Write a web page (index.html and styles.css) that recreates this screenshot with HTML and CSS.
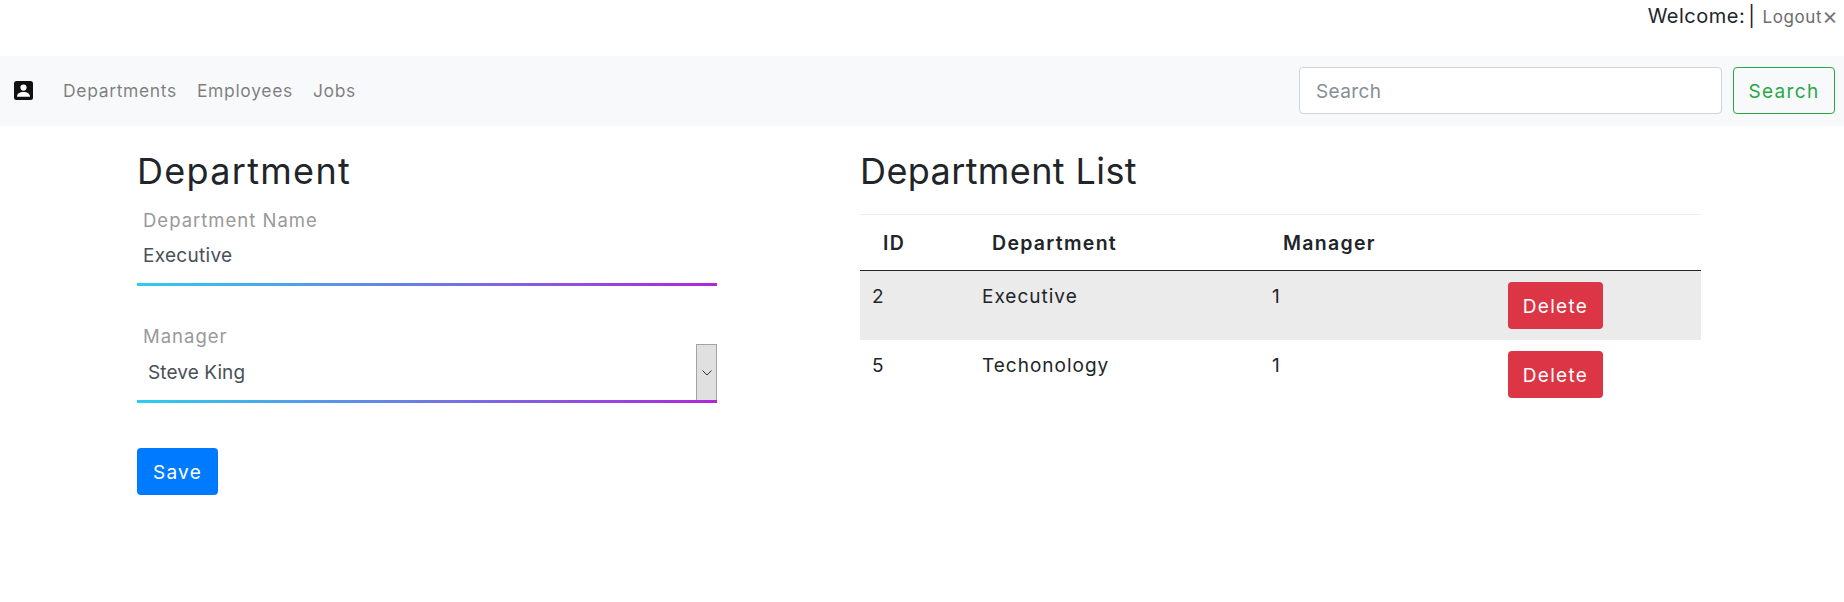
FILE: index.html
```html
<!DOCTYPE html>
<html lang="en">
<head>
  <meta charset="UTF-8">
  <title>Departments</title>
  <link rel="stylesheet" href="styles.css">
</head>
<body>
  <div class="topbar">
    <span class="welcome">Welcome: |</span>
    <a class="logout" href="#">Logout</a>
    <span class="close">×</span>
  </div>

  <nav class="navbar">
    <a class="brand" href="#">
      <svg width="19" height="19" viewBox="0 0 19 19">
        <rect width="19" height="19" rx="2.5" fill="#111"/>
        <circle cx="9.5" cy="6.6" r="3.1" fill="#fff"/>
        <path d="M3 15.8c0-3.4 2.6-4.9 6.500-4.900s6.500 1.500 6.500 4.900z" fill="#fff"/>
      </svg>
    </a>
    <ul class="nav-links">
      <li><a href="#">Departments</a></li>
      <li><a href="#">Employees</a></li>
      <li><a href="#">Jobs</a></li>
    </ul>
    <form class="search">
      <input type="text" placeholder="Search">
      <button type="button" class="btn btn-search">Search</button>
    </form>
  </nav>

  <main class="content">
    <section>
      <h2 class="title-form">Department</h2>
      <form>
        <div class="field">
          <label>Department Name</label>
          <input type="text" value="Executive">
        </div>
        <div class="field field-select">
          <label>Manager</label>
          <div class="select-row">
            <select>
              <option>Steve King</option>
            </select>
            <span class="select-arrow">
              <svg width="10" height="6" viewBox="0 0 10 6"><path d="M.5.5 5 5 9.500.5" fill="none" stroke="#333"/></svg>
            </span>
          </div>
        </div>
        <button type="button" class="btn btn-save">Save</button>
      </form>
    </section>

    <section>
      <h2>Department List</h2>
      <table class="list">
        <thead>
          <tr><th class="col-id">ID</th><th class="col-name">Department</th><th class="col-mgr">Manager</th><th class="col-action"></th></tr>
        </thead>
        <tbody>
          <tr class="odd"><td>2</td><td>Executive</td><td>1</td><td><button type="button" class="btn btn-delete">Delete</button></td></tr>
          <tr><td>5</td><td>Techonology</td><td>1</td><td><button type="button" class="btn btn-delete">Delete</button></td></tr>
        </tbody>
      </table>
    </section>
  </main>
</body>
</html>
```

FILE: styles.css
```css
* { box-sizing: border-box; }
body { margin: 0; font-family: Inter, "Open Sans", sans-serif; font-size: 16px; color: #212529; background: #fff; }
a { text-decoration: none; }

.topbar { height: 56px; display: flex; justify-content: flex-end; align-items: flex-start; padding: 4px 6px 0 0; line-height: 24px; }
.welcome { font-size: 20px; letter-spacing: .5px; word-spacing: -3px; margin-right: 7px; }
.logout { font-size: 17px; letter-spacing: .6px; color: #6c6c6c; margin-top: 1px; }
.close { font-size: 24px; color: #777; }

.navbar { height: 70px; background: #f8f9fa; display: flex; align-items: center; padding: 0 9px 0 14px; }
.brand { display: flex; margin-right: 30px; margin-bottom: 2px; }
.nav-links { display: flex; gap: 20px; list-style: none; margin: 0 0 2px; padding: 0; }
.nav-links a { font-size: 17.5px; letter-spacing: .65px; color: rgba(0,0,0,.5); }
.search { margin: 0 0 2px auto; display: flex; gap: 11px; }
.search input { width: 423px; height: 47px; border: 1px solid #ced4da; border-radius: 4px; padding: 2px 16px 0; font: inherit; font-size: 19px; letter-spacing: .4px; }
.search input::placeholder { color: #868e96; }

.btn { font: inherit; font-size: 19px; letter-spacing: 1.3px; border-radius: 4px; cursor: pointer; border: 1px solid transparent; padding: 2px 0 0; }
.btn-search { width: 102px; height: 47px; color: #28a745; border-color: #28a745; background: transparent; }
.btn-save { width: 81px; height: 47px; color: #fff; background: #007bff; margin-top: 45px; }
.btn-delete { width: 95px; height: 47px; color: #fff; background: #dc3545; }

.content { display: grid; grid-template-columns: 580px 841px; column-gap: 143px; padding-left: 137px; }
h2 { font-size: 36px; font-weight: 400; letter-spacing: .4px; line-height: 44px; margin: 23px 0 0; }
.title-form { letter-spacing: 1.3px; }

.field { display: flex; flex-direction: column; }
.field label { font-size: 18.5px; letter-spacing: 1px; color: #999; padding-left: 6px; line-height: 24px; margin-top: 15px; }
.field input { height: 54px; border: 0; border-bottom: 3px solid; border-image: linear-gradient(to right, #2ccdf2, #b026d8) 1; padding: 0 6px 5px; font: inherit; font-size: 19px; letter-spacing: .3px; color: #495057; outline: none; }
.field-select { margin-top: 23px; }
.select-row { display: flex; height: 55px; align-items: stretch; border-bottom: 3px solid; border-image: linear-gradient(to right, #2ccdf2, #b026d8) 1; }
.select-row select { flex: 1; appearance: none; border: 0; background: #fff; padding: 0 11px 4px; font: inherit; font-size: 19px; letter-spacing: .1px; color: #495057; outline: none; }
.select-arrow { width: 21px; margin-top: -4px; background: #e0e0e0; border: 1px solid #a3a3a3; border-bottom: 0; display: flex; align-items: center; justify-content: center; }

.list { width: 100%; table-layout: fixed; margin-top: 21px; border-collapse: separate; border-spacing: 0; font-size: 19px; letter-spacing: 1px; border-top: 1px solid #eeeeee; }
.list th { height: 56px; font-size: 19.5px; font-weight: 600; letter-spacing: 1.3px; text-align: left; border-bottom: 1px solid #212529; padding: 0; }
.list td { height: 69px; vertical-align: top; padding: 14px 12px 0; }
.list td:last-child { padding: 11px 0 0; }
.list .odd td { background: #ebebeb; }
.list .col-id { width: 110px; padding-left: 23px; }
.list .col-name { width: 290px; padding-left: 22px; }
.list .col-mgr { width: 248px; padding-left: 23px; }
.list .col-action { width: 193px; }
```
